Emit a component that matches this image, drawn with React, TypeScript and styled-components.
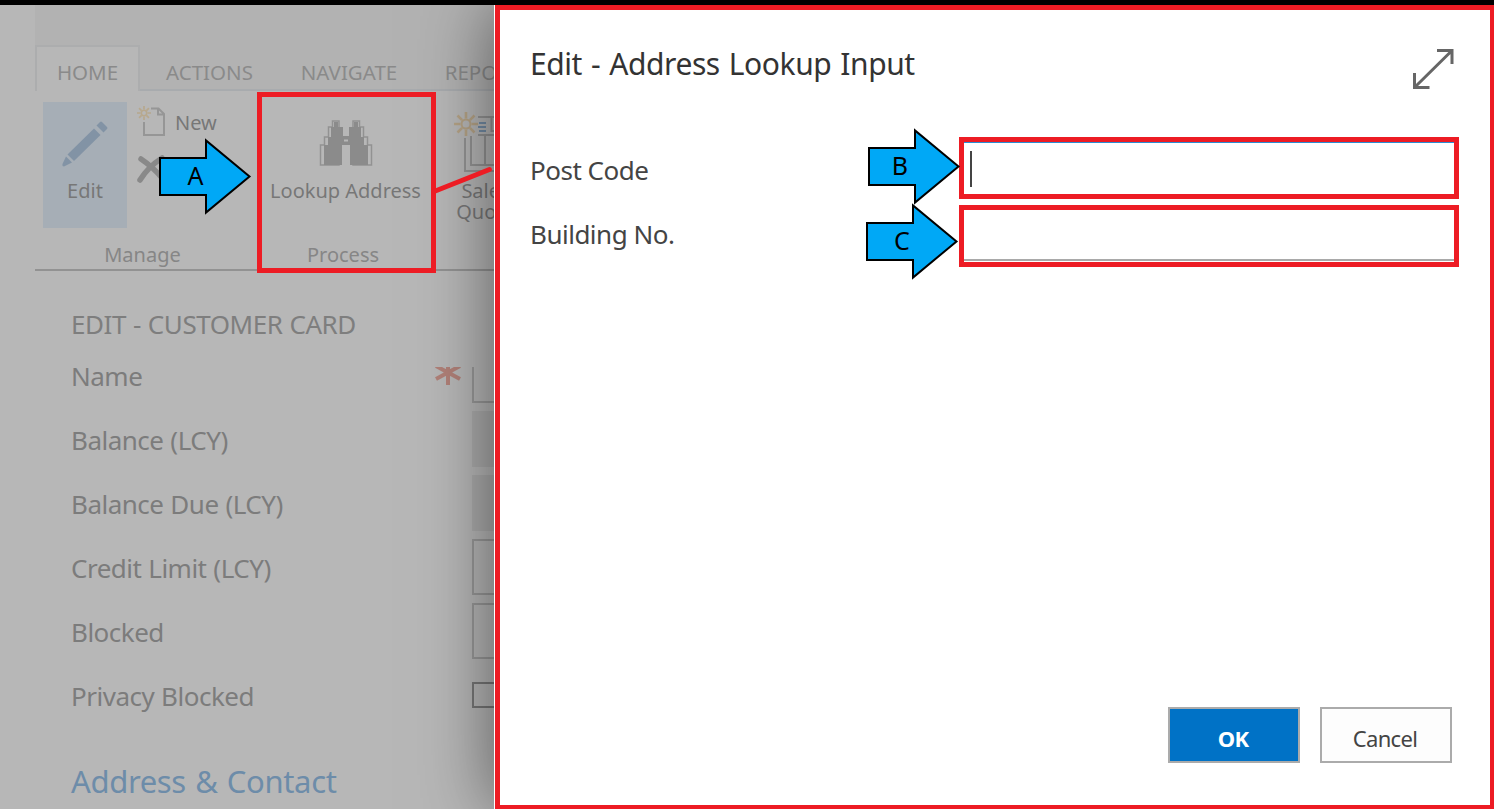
import React from "react";
import styled, { createGlobalStyle } from "styled-components";

const GlobalStyle = createGlobalStyle`
  * { box-sizing: border-box; }
  body {
    margin: 0;
    overflow: hidden;
    font-family: "Noto Sans", "Open Sans", sans-serif;
  }
`;

const red = "#ed1c24";

const Screen = styled.div`
  position: relative;
  width: 1494px;
  height: 809px;
  overflow: hidden;
  background: #b7b7b7;
  display: flex;
  flex-direction: column;
`;

const TopBar = styled.div`
  flex: none;
  height: 5px;
  background: #000;
  position: relative;
  z-index: 2;
`;

const Workspace = styled.div`
  flex: 1;
  min-height: 0;
  display: flex;
`;

const CustomerCard = styled.main`
  width: 494px;
  flex: none;
  overflow: hidden;
  padding-left: 35px;
  white-space: nowrap;
`;

const TabStrip = styled.nav`
  height: 86px;
  padding-top: 40px;
  display: flex;
  background: #b2b2b2;
`;

const Tab = styled.div<{ $width: number; $active?: boolean }>`
  flex: none;
  width: ${(p) => p.$width}px;
  height: 46px;
  padding-top: ${(p) => (p.$active ? 11 : 13)}px;
  border: 2px solid ${(p) => (p.$active ? "#acadae" : "transparent")};
  border-width: ${(p) => (p.$active ? "2px 2px 0" : "0 0 2px")};
  border-bottom-color: #a8abae;
  background: ${(p) => (p.$active ? "#b7b7b7" : "none")};
  color: #8a8a8a;
  font-size: 20.5px;
  line-height: 28px;
  text-align: center;
`;

const Ribbon = styled.section`
  height: 180px;
  display: flex;
  border-bottom: 2px solid #929292;
  color: #777;
  font-size: 20px;
`;

const Group = styled.div<{ $width: number }>`
  flex: none;
  width: ${(p) => p.$width}px;
  padding: 11px 8px 0;
  display: flex;
  flex-direction: column;
  align-items: center;
`;

const GroupBody = styled.div<{ $indent?: number }>`
  height: 142px;
  width: 100%;
  padding-left: ${(p) => p.$indent ?? 0}px;
  display: flex;
  justify-content: flex-start;
  gap: 10px;
`;

const GroupLabel = styled.div`
  color: #868686;
  line-height: 28px;
`;

const LargeAction = styled.div<{ $selected?: boolean }>`
  flex: none;
  width: ${(p) => (p.$selected ? "84px" : "100%")};
  height: 126px;
  display: flex;
  flex-direction: column;
  align-items: center;
  background: ${(p) => (p.$selected ? "#a6aeb6" : "none")};
`;

const IconSlot = styled.div`
  height: 78px;
  flex: none;
  svg { display: block; }
`;

const ActionText = styled.div<{ $inset?: number }>`
  padding-right: ${(p) => p.$inset ?? 0}px;
  line-height: 21px;
  text-align: center;
`;

const SmallActions = styled.div`
  display: flex;
  flex-direction: column;
  gap: 10px;
`;

const SmallAction = styled.div`
  display: flex;
  gap: 8px;
  height: 37px;
  line-height: 41px;
  svg { display: block; flex: none; }
`;

const Form = styled.section`
  padding: 36px 0 0 36px;
`;

const FormTitle = styled.h1`
  margin: 0;
  height: 40px;
  font-size: 26px;
  font-weight: 400;
  line-height: 34px;
  letter-spacing: -0.45px;
  word-spacing: 0.7px;
  color: #7e7e7e;
`;

const FormRow = styled.div`
  height: 56px;
  margin-bottom: 8px;
  display: flex;
  align-items: flex-end;
  color: #7c7c7c;
  font-size: 26px;
  letter-spacing: -0.5px;
  word-spacing: 0.6px;
`;

const FormLabel = styled.div`
  flex: none;
  width: 363px;
  height: 56px;
  line-height: 59px;
`;

const Required = styled.svg`
  flex: none;
  width: 28px;
  height: 36px;
  margin-right: 10px;
`;

const Field = styled.div<{ $kind: "clipped" | "readonly" | "box" | "check" }>`
  flex: none;
  width: 80px;
  margin-left: ${(p) => (p.$kind === "clipped" ? 0 : 38)}px;
  height: ${(p) => ({ clipped: 36, readonly: 56, box: 56, check: 26 })[p.$kind]}px;
  margin-bottom: ${(p) => (p.$kind === "check" ? 15 : 0)}px;
  border: ${(p) => (p.$kind === "readonly" ? 0 : 2)}px solid ${(p) => (p.$kind === "check" ? "#777" : "#989898")};
  border-top-width: ${(p) => (p.$kind === "clipped" || p.$kind === "readonly" ? 0 : 2)}px;
  background: ${(p) => (p.$kind === "readonly" ? "#acacac" : "none")};
`;

const SectionTitle = styled.h2`
  margin: 0;
  padding-top: 28px;
  font-size: 31px;
  font-weight: 400;
  line-height: 44px;
  letter-spacing: -0.35px;
  word-spacing: 1.6px;
  color: #6d8ca9;
`;

const Dialog = styled.section`
  position: relative;
  z-index: 1;
  width: 1000px;
  background: #fff;
  padding-left: 1px;
  box-shadow: 0 0 68px rgba(0, 0, 0, 0.52);
`;

const DialogFrame = styled.div`
  height: 100%;
  border: 5px solid ${red};
  border-right-width: 4px;
  border-bottom-width: 4px;
  padding: 39px 36px 42px 30px;
  display: flex;
  flex-direction: column;
  color: #444;
`;

const DialogHeader = styled.header`
  height: 88px;
  display: flex;
  justify-content: space-between;
  svg { display: block; }
`;

const DialogTitle = styled.h1`
  margin: -5px 0 0;
  font-size: 30px;
  font-weight: 400;
  line-height: 40px;
  letter-spacing: -0.42px;
  word-spacing: 1.6px;
  color: #333;
`;

const DialogRow = styled.div`
  display: flex;
  justify-content: space-between;
  height: 62px;
  margin-bottom: 6px;
  width: 929px;
  font-size: 26px;
`;

const DialogLabel = styled.label<{ $top: number }>`
  padding-top: ${(p) => p.$top}px;
  line-height: 36px;
  letter-spacing: -0.5px;
`;

const InputFrame = styled.div<{ $focused?: boolean }>`
  width: 500px;
  border: 5px solid ${red};
  padding: ${(p) => (p.$focused ? "0" : "0 0 1px")};
`;

const Input = styled.div<{ $focused?: boolean }>`
  height: 100%;
  padding: 8px 6px;
  border-top: ${(p) => (p.$focused ? "1px solid #2a8dd4" : "0")};
  border-bottom: ${(p) => (p.$focused ? "0" : "2px solid #a9a9a9")};
`;

const Caret = styled.div`
  width: 2px;
  height: 36px;
  background: #444;
`;

const Buttons = styled.footer`
  margin-top: auto;
  margin-right: 2px;
  display: flex;
  justify-content: flex-end;
  gap: 20px;
`;

const Button = styled.button<{ $primary?: boolean }>`
  width: 132px;
  height: 56px;
  padding: 6px 2px 0 0;
  border: 2px solid #ababab;
  border-radius: 0;
  background: ${(p) => (p.$primary ? "#0072c6" : "#fdfdfd")};
  color: ${(p) => (p.$primary ? "#fff" : "#444")};
  font-family: inherit;
  font-size: 22px;
  font-weight: ${(p) => (p.$primary ? 700 : 400)};
  letter-spacing: -0.7px;
`;

/* Callouts drawn over the screen */
const Highlight = styled.div`
  position: absolute;
  z-index: 3;
  left: 257px;
  top: 92px;
  width: 179px;
  height: 181px;
  border: 5px solid ${red};
`;

const Connector = styled.svg`
  position: absolute;
  z-index: 3;
  left: 430px;
  top: 160px;
`;

const ArrowSvg = styled.svg<{ $x: number; $y: number }>`
  position: absolute;
  z-index: 3;
  left: ${(p) => p.$x}px;
  top: ${(p) => p.$y}px;
  font-size: 25px;
`;

function Arrow({ x, y, letter, textX }: { x: number; y: number; letter: string; textX: number }) {
  return (
    <ArrowSvg $x={x} $y={y} width="96" height="80">
      <path d="M3 21H49V3.500L92.500 39.500L49 75.500V58H3Z" fill="#00a8f6" stroke="#000" strokeWidth="2" />
      <text x={textX} y="48" textAnchor="middle">{letter}</text>
    </ArrowSvg>
  );
}

const burst = (cx: number, cy: number, inner: number, outer: number) =>
  Array.from({ length: 8 }, (_, i) => {
    const a = (i * Math.PI) / 4;
    const [c, s] = [Math.cos(a), Math.sin(a)];
    return `M${cx + c * inner} ${cy + s * inner}L${cx + c * outer} ${cy + s * outer}`;
  }).join("");

const Pencil = () => (
  <svg width="84" height="78">
    <g fill="#8293a5">
      <path d="M24.500 52.500L51 26.500L57.500 33L31 59Z" />
      <path d="M53.500 23.500L57 20Q58 19 59 20L64 25Q65 26 64 27L60.500 30.500Z" />
      <path d="M23 54.500L29 60.500L21 64.500Q19 64.500 19.500 62Z" />
    </g>
  </svg>
);

const NewDoc = () => (
  <svg width="30" height="37" fill="none">
    <path d="M7 20V33H27V12L21.500 6.500H14M21 7V12.500H27" stroke="#969696" strokeWidth="2" />
    <path d={burst(7, 11, 3.5, 7)} stroke="#b7a88d" strokeWidth="1.700" />
    <circle cx="7" cy="11" r="2.700" stroke="#b7a88d" strokeWidth="1.600" />
  </svg>
);

const Cross = () => (
  <svg width="30" height="37">
    <path d="M4 10Q16 18 26 30M25 9Q11 18 3 31" fill="none" stroke="#898989" strokeWidth="5.500" strokeLinecap="round" />
  </svg>
);

const Binoculars = () => (
  <svg width="54" height="78">
    <g fill="none" stroke="#929292" strokeWidth="1.500">
      <path d="M1.500 63V43H5.500V35H9.500V25H13.500V19H20V63ZM52.500 63V43H48.500V35H44.500V25H40.500V19H34V63Z" />
    </g>
    <path
      d="M15 20H19V25H24V34H30V25H35V20H39V25H42V35H45V43H49V63H31V43H23V63H5V43H9V35H12V25H15ZM25 37.500V39.500H29V37.500Z"
      fill="#8b8b8b"
      fillRule="evenodd"
    />
  </svg>
);

const QuoteDocs = () => (
  <svg width="74" height="78" fill="none">
    <path d="M24 15H44M24 33H44M11 36V69H44M17 34V63H44M31 34V63M37.500 15V29H44" stroke="#949494" strokeWidth="2" />
    <path d="M25 21H32M24 25H32M25 29H32" stroke="#738ca5" strokeWidth="1.800" />
    <circle cx="12" cy="22" r="4.500" stroke="#b5a386" strokeWidth="2" />
    <path d={burst(12, 22, 5.5, 12)} stroke="#b5a386" strokeWidth="2.600" />
  </svg>
);

const Expand = () => (
  <svg width="41" height="40" viewBox="0 0 41 40">
    <path d="M24 1.500H39V15M1.500 24V38.500H16.500M2.500 37.500L38.500 2" fill="none" stroke="#666" strokeWidth="3" />
  </svg>
);

const rows: { label: string; kind: "readonly" | "box" | "check" }[] = [
  { label: "Balance (LCY)", kind: "readonly" },
  { label: "Balance Due (LCY)", kind: "readonly" },
  { label: "Credit Limit (LCY)", kind: "box" },
  { label: "Blocked", kind: "box" },
  { label: "Privacy Blocked", kind: "check" },
];

export default function App() {
  return (
    <Screen>
      <GlobalStyle />
      <TopBar />
      <Workspace>
        <CustomerCard>
          <TabStrip>
            <Tab $width={105} $active>HOME</Tab>
            <Tab $width={139}>ACTIONS</Tab>
            <Tab $width={140}>NAVIGATE</Tab>
            <Tab $width={128}>REPORT</Tab>
          </TabStrip>
          <Ribbon>
            <Group $width={215}>
              <GroupBody>
                <LargeAction $selected>
                  <IconSlot><Pencil /></IconSlot>
                  <ActionText>Edit</ActionText>
                </LargeAction>
                <SmallActions>
                  <SmallAction><NewDoc />New</SmallAction>
                  <SmallAction><Cross /></SmallAction>
                </SmallActions>
              </GroupBody>
              <GroupLabel>Manage</GroupLabel>
            </Group>
            <Group $width={186}>
              <GroupBody $indent={5}>
                <LargeAction>
                  <IconSlot><Binoculars /></IconSlot>
                  <ActionText>Lookup Address</ActionText>
                </LargeAction>
              </GroupBody>
              <GroupLabel>Process</GroupLabel>
            </Group>
            <Group $width={109}>
              <GroupBody>
                <LargeAction>
                  <IconSlot><QuoteDocs /></IconSlot>
                  <ActionText $inset={10}>Sales<br />Quote</ActionText>
                </LargeAction>
              </GroupBody>
            </Group>
          </Ribbon>
          <Form>
            <FormTitle>EDIT - CUSTOMER CARD</FormTitle>
            <FormRow>
              <FormLabel>Name</FormLabel>
              <Required viewBox="0 0 28 36">
                <path d="M2 -1L26 12M26 -1L2 12M14 0V18" stroke="#b08078" strokeWidth="4" />
              </Required>
              <Field $kind="clipped" />
            </FormRow>
            {rows.map((row) => (
              <FormRow key={row.label}>
                <FormLabel>{row.label}</FormLabel>
                <Field $kind={row.kind} />
              </FormRow>
            ))}
            <SectionTitle>Address &amp; Contact</SectionTitle>
          </Form>
        </CustomerCard>
        <Dialog>
          <DialogFrame>
            <DialogHeader>
              <DialogTitle>Edit - Address Lookup Input</DialogTitle>
              <Expand />
            </DialogHeader>
            <DialogRow>
              <DialogLabel $top={15}>Post Code</DialogLabel>
              <InputFrame $focused><Input $focused><Caret /></Input></InputFrame>
            </DialogRow>
            <DialogRow>
              <DialogLabel $top={11}>Building No.</DialogLabel>
              <InputFrame><Input /></InputFrame>
            </DialogRow>
            <Buttons>
              <Button $primary>OK</Button>
              <Button>Cancel</Button>
            </Buttons>
          </DialogFrame>
        </Dialog>
      </Workspace>
      <Highlight />
      <Connector width="66" height="40">
        <path d="M4 31.500L59.500 9.500" stroke={red} strokeWidth="4.800" strokeLinecap="round" />
      </Connector>
      <Arrow x={157} y={137} letter="A" textX={38.5} />
      <Arrow x={866} y={127} letter="B" textX={34} />
      <Arrow x={864} y={202} letter="C" textX={38} />
    </Screen>
  );
}
